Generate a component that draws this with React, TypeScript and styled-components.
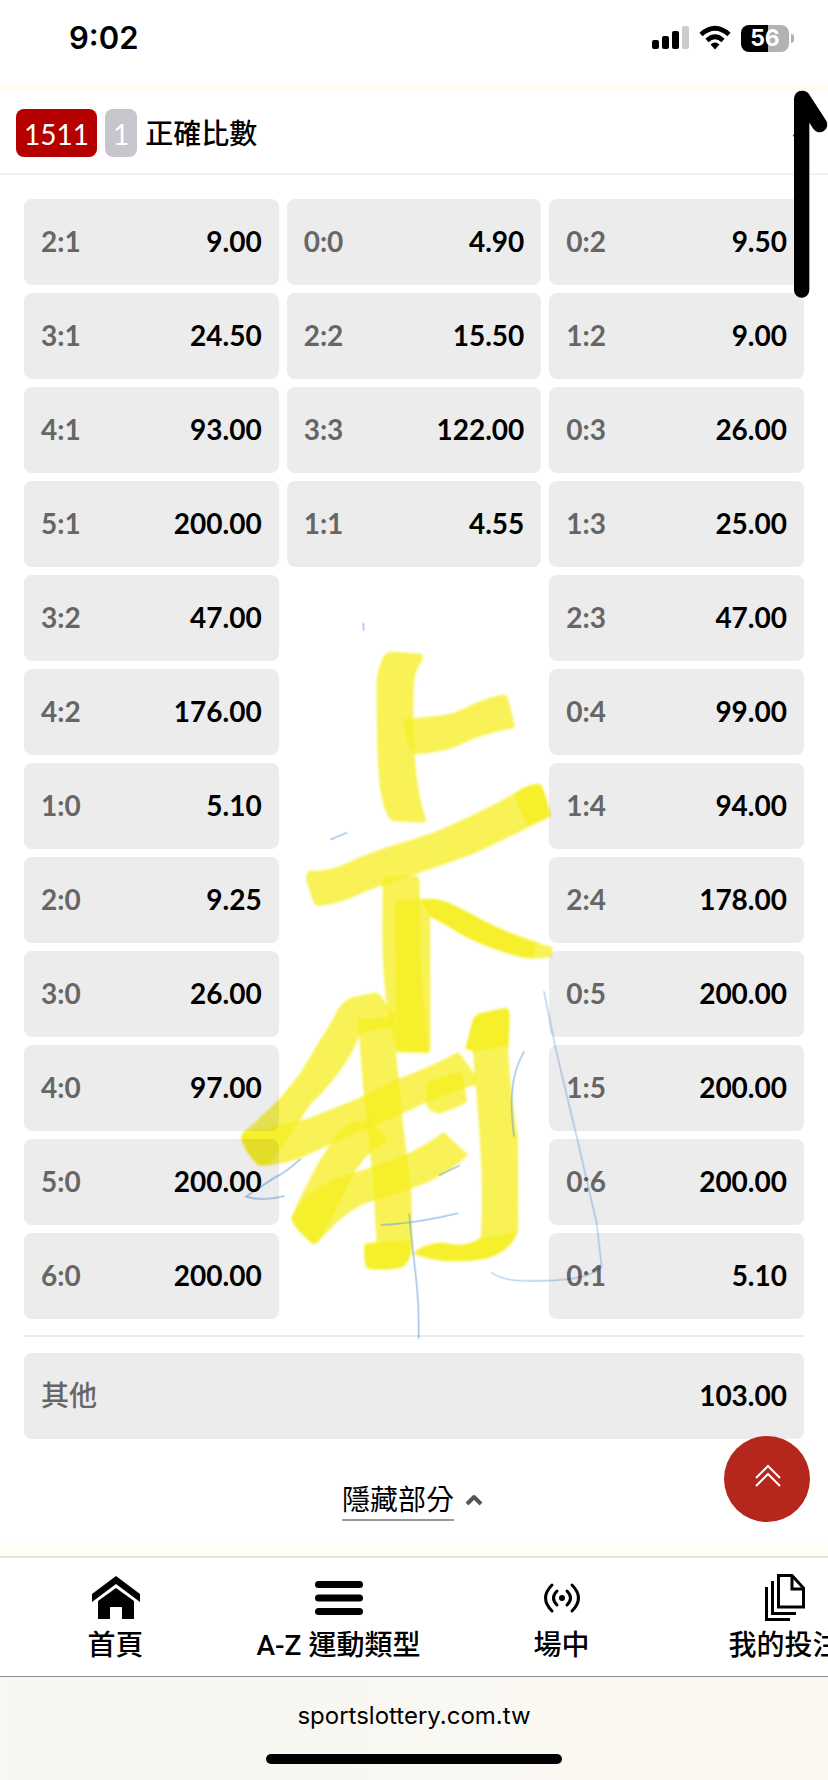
import React from "react";
import styled, { createGlobalStyle } from "styled-components";

const GlobalStyle = createGlobalStyle`
  *, *::before, *::after { box-sizing: border-box; }
  body {
    margin: 0;
    background: #fff;
    color: #000;
    font-family: Lato, "Noto Sans CJK TC", sans-serif;
  }
  button { font: inherit; color: inherit; border: 0; padding: 0; background: none; cursor: pointer; }
  a { color: inherit; text-decoration: none; }
  svg { display: block; overflow: visible; }
`;

const Page = styled.div`
  position: relative;
  display: flex;
  flex-direction: column;
  min-height: 100vh;
  overflow: hidden;
`;

const StatusBar = styled.header`
  display: flex;
  align-items: center;
  justify-content: space-between;
  height: 82px;
  padding: 0 34px 6px 69px;
  font-family: Inter, sans-serif;
`;

const Clock = styled.time`
  font-size: 31px;
  font-weight: 600;
  line-height: 40px;
`;

const StatusIcons = styled.div`
  display: flex;
  align-items: center;
  gap: 10px;
`;

const Battery = styled.div`
  display: flex;
  align-items: center;
  gap: 2px;
`;

const BatteryBody = styled.div`
  width: 48px;
  height: 27px;
  border-radius: 8px;
  background: linear-gradient(90deg, #000 56%, #b2b2b2 56%);
  color: #fff;
  font-size: 23px;
  font-weight: 700;
  line-height: 27px;
  text-align: center;
`;

const BatteryTip = styled.span`
  width: 3px;
  height: 9px;
  border-radius: 0 3px 3px 0;
  background: #b2b2b2;
`;

const CreamBand = styled.div<{ $up?: boolean }>`
  height: ${(p) => (p.$up ? 14 : 12)}px;
  background: ${(p) => (p.$up ? "linear-gradient(#fff, #fffdf4 50%)" : "linear-gradient(#fffefa, #fffcf4 40%, #fffdf6)")};
`;

const MarketHeader = styled.div`
  display: flex;
  align-items: center;
  gap: 8px;
  height: 81px;
  padding: 0 18px 2px 16px;
  border-bottom: 2px solid #f0f0f1;
`;

const Tag = styled.span<{ $tone: "red" | "grey" }>`
  height: 48px;
  padding: 0 8px;
  border-radius: 8px;
  background: ${(p) => (p.$tone === "red" ? "#b50000" : "#c7c6cc")};
  color: #fff;
  font-size: 28px;
  line-height: 50px;
`;

const MarketTitle = styled.h1`
  flex: 1;
  margin: 0;
  font-size: 28px;
  font-weight: 500;
  line-height: 48px;
`;

const Board = styled.main`
  flex: 1;
  padding: 24px 24px 0;
`;

const Columns = styled.div`
  display: grid;
  grid-template-columns: repeat(3, 1fr);
  gap: 8px;
`;

const Column = styled.div`
  display: flex;
  flex-direction: column;
  gap: 8px;
`;

const OddsButton = styled.button`
  display: flex;
  align-items: center;
  justify-content: space-between;
  width: 100%;
  height: 86px;
  padding: 0 17px 2px;
  border-radius: 8px;
  background: #ececec;
  font-size: 28px;
  line-height: 36px;
`;

const Outcome = styled.span<{ $named: boolean }>`
  color: #666;
  font-weight: ${(p) => (p.$named ? 500 : 700)};
`;

const Price = styled.span`
  font-weight: 700;
`;

const Rule = styled.hr`
  height: 2px;
  margin: 16px 0;
  border: 0;
  background: #ebebeb;
`;

const ToggleRow = styled.div`
  display: flex;
  justify-content: center;
  padding: 40px 3px 21px 0;
`;

const ToggleButton = styled.button`
  display: flex;
  align-items: center;
  gap: 11px;
`;

const ToggleLabel = styled.span`
  border-bottom: 2px solid #999;
  font-size: 28px;
  line-height: 40px;
`;

const TopButton = styled.button`
  position: absolute;
  right: 18px;
  bottom: 258px;
  display: flex;
  align-items: center;
  justify-content: center;
  width: 86px;
  height: 86px;
  padding: 0 0 6px 2px;
  border-radius: 50%;
  background: #b5261c;
`;

const Nav = styled.nav`
  display: flex;
  height: 121px;
  padding: 18px 0 0 4px;
  border-top: 2px solid #e4e4e4;
  border-bottom: 1px solid #8f8e8b;
  overflow: hidden;
`;

const NavItem = styled.a`
  flex: 0 0 223px;
  display: flex;
  flex-direction: column;
  align-items: center;
  gap: 6px;
  font-family: Roboto, "Noto Sans CJK TC", sans-serif;
  font-size: 28px;
  font-weight: 500;
  line-height: 40px;
  white-space: nowrap;
`;

const BrowserBar = styled.footer`
  display: flex;
  flex-direction: column;
  align-items: center;
  justify-content: space-between;
  height: 103px;
  padding: 23px 0 16px;
  background: linear-gradient(90deg, #f9f7f2, #f8f6f0 30%, #faf8f2 60%, #fbf8f1);
`;

const Address = styled.a`
  font-family: Inter, sans-serif;
  font-size: 24px;
  line-height: 32px;
`;

const HomeIndicator = styled.span`
  width: 296px;
  height: 10px;
  border-radius: 5px;
  background: #000;
`;

const Doodle = styled.svg`
  position: absolute;
  top: 0;
  left: 0;
  width: 100%;
  height: auto;
  mix-blend-mode: multiply;
  pointer-events: none;
`;

const Marker = styled.g`
  fill: #f6ee1c;
  fill-opacity: 0.74;
  stroke: none;
  filter: blur(3px);
`;

const Pencil = styled.g`
  fill: none;
  stroke: #5c9ae6;
  stroke-width: 4px;
  stroke-linecap: round;
  stroke-opacity: 0.7;
`;

const Pen = styled.path`
  fill: none;
  stroke: #000;
  stroke-width: 46px;
  stroke-linecap: round;
  stroke-linejoin: round;
`;

type Odds = [string, string];

const columns: Odds[][] = [
  [
    ["2:1", "9.00"], ["3:1", "24.50"], ["4:1", "93.00"], ["5:1", "200.00"],
    ["3:2", "47.00"], ["4:2", "176.00"], ["1:0", "5.10"], ["2:0", "9.25"],
    ["3:0", "26.00"], ["4:0", "97.00"], ["5:0", "200.00"], ["6:0", "200.00"],
  ],
  [["0:0", "4.90"], ["2:2", "15.50"], ["3:3", "122.00"], ["1:1", "4.55"]],
  [
    ["0:2", "9.50"], ["1:2", "9.00"], ["0:3", "26.00"], ["1:3", "25.00"],
    ["2:3", "47.00"], ["0:4", "99.00"], ["1:4", "94.00"], ["2:4", "178.00"],
    ["0:5", "200.00"], ["1:5", "200.00"], ["0:6", "200.00"], ["0:1", "5.10"],
  ],
];

const OddsCell = ({ odds: [label, price] }: { odds: Odds }) => (
  <OddsButton type="button">
    <Outcome $named={!label.includes(":")}>{label}</Outcome>
    <Price>{price}</Price>
  </OddsButton>
);

const Chevron = () => (
  <svg width="18" height="12" viewBox="0 0 18 12" fill="none" stroke="#555" strokeWidth="4" aria-hidden="true">
    <path d="M2 10L9 3L16 10" strokeLinejoin="round" />
  </svg>
);

const SignalIcon = () => (
  <svg width="37" height="24" viewBox="0 0 37 24" aria-hidden="true">
    <rect x="0" y="14" width="7" height="9" rx="2" />
    <rect x="10" y="10" width="7" height="13" rx="2" />
    <rect x="20" y="5" width="7" height="18" rx="2" />
    <rect x="30" y="0" width="7" height="23" rx="2" fill="#ccc" />
  </svg>
);

const WifiIcon = () => (
  <svg width="32" height="24" viewBox="0 0 32 24" aria-hidden="true">
    <path d="M2 8.500Q16 -4 30 8.500" fill="none" stroke="#000" strokeWidth="4.800" />
    <path d="M8 14.500Q16 7 24 14.500" fill="none" stroke="#000" strokeWidth="4.600" />
    <path d="M11.500 18.500Q16 14.500 20.500 18.500L16 23.500Z" />
  </svg>
);

const HomeIcon = () => (
  <svg width="48" height="44" viewBox="0 0 48 44" aria-hidden="true">
    <path d="M24 0L48 18V26L24 8L0 26V18Z" />
    <path d="M24 12L42 25V43H30V31H18V43H6V25Z" />
  </svg>
);

const MenuIcon = () => (
  <svg width="48" height="44" viewBox="0 0 48 44" aria-hidden="true">
    <rect y="5" width="48" height="7" rx="3.500" />
    <rect y="18.500" width="48" height="7" rx="3.500" />
    <rect y="32" width="48" height="7" rx="3.500" />
  </svg>
);

const LiveIcon = () => (
  <svg width="36" height="44" viewBox="0 0 36 44" fill="none" stroke="#000" strokeWidth="3" strokeLinecap="round" aria-hidden="true">
    <circle cx="18" cy="22" r="3" fill="#000" stroke="none" />
    <path d="M13 15Q6 22 13 29M23 15Q30 22 23 29" />
    <path d="M8 9Q-5 22 8 35M28 9Q41 22 28 35" />
  </svg>
);

const SlipsIcon = () => (
  <svg width="42" height="44" viewBox="0 0 42 44" fill="none" stroke="#000" strokeWidth="3" aria-hidden="true">
    <path d="M14.500 -0.500H28L39.500 12V31H14.500Z" />
    <path d="M28 0V13H40" />
    <path d="M8.500 5V37.500H32M2.500 11V43.500H26" />
  </svg>
);

export default function App() {
  return (
    <>
      <GlobalStyle />
      <Page>
        <StatusBar>
          <Clock>9:02</Clock>
          <StatusIcons>
            <SignalIcon />
            <WifiIcon />
            <Battery>
              <BatteryBody>56</BatteryBody>
              <BatteryTip />
            </Battery>
          </StatusIcons>
        </StatusBar>
        <CreamBand />
        <MarketHeader>
          <Tag $tone="red">1511</Tag>
          <Tag $tone="grey">1</Tag>
          <MarketTitle>正確比數</MarketTitle>
          <button type="button" aria-label="收合">
            <Chevron />
          </button>
        </MarketHeader>
        <Board>
          <Columns>
            {columns.map((column, i) => (
              <Column key={i}>
                {column.map((odds) => (
                  <OddsCell key={odds[0]} odds={odds} />
                ))}
              </Column>
            ))}
          </Columns>
          <Rule />
          <OddsCell odds={["其他", "103.00"]} />
          <ToggleRow>
            <ToggleButton type="button">
              <ToggleLabel>隱藏部分</ToggleLabel>
              <Chevron />
            </ToggleButton>
          </ToggleRow>
        </Board>
        <CreamBand $up />
        <Nav>
          <NavItem href="#home"><HomeIcon />首頁</NavItem>
          <NavItem href="#sports"><MenuIcon />A-Z 運動類型</NavItem>
          <NavItem href="#live"><LiveIcon />場中</NavItem>
          <NavItem href="#bets"><SlipsIcon />我的投注</NavItem>
        </Nav>
        <BrowserBar>
          <Address href="#site">sportslottery.com.tw</Address>
          <HomeIndicator />
        </BrowserBar>
        <TopButton type="button" aria-label="回到頂端">
          <svg width="26" height="22" viewBox="0 0 26 22" fill="none" stroke="#fff" strokeWidth="2" aria-hidden="true">
            <path d="M1 13L13 1L25 13M1 21L13 9L25 21" />
          </svg>
        </TopButton>
        <Doodle viewBox="0 0 2484 4200" aria-hidden="true">
          <Marker>
            <g transform="translate(690 1800)">
              <path d="M480 155L570 160Q582 164 578 180Q552 215 551 260C548 400 552 560 588 655Q586 668 575 668L492 664Q478 660 470 640C445 580 440 500 440 240Q446 190 466 162Z" />
              <path d="M520 355L550 355C600 348 640 350 680 335C730 312 770 292 818 284Q830 283 834 295L856 382C800 395 750 405 700 430C650 455 600 458 553 464C530 430 525 390 520 355Z" />
              <path d="M240 812Q300 815 360 785C450 740 560 720 640 685C720 650 800 612 860 575Q900 552 930 552Q940 560 962 650C860 700 780 740 720 765C600 810 500 840 420 870C360 895 320 915 265 918Q255 918 250 905L228 840Q228 816 240 812Z" />
              <path d="M855 580Q890 552 930 552Q942 560 962 645Q920 668 892 675Q862 620 855 580Z" />
            </g>
            <g transform="translate(690 2580)">
              <path d="M458 52L555 46Q570 48 569 70L571 280Q580 450 598 575L500 575Q455 420 457 200Z" />
              <path d="M495 120L600 170L602 555Q602 578 590 579L498 577Z" />
              <path d="M495 120L610 116C650 120 680 140 730 165C800 205 880 235 968 262L965 290Q920 300 870 292C790 270 720 240 680 215C640 190 610 175 600 170Z" />
              <path d="M572 120L610 118C650 122 680 140 730 165C800 205 860 228 920 246L910 290Q880 292 860 285C790 268 720 240 680 215C640 190 610 175 600 170Z" />
            </g>
            <g transform="translate(690 3150)">
              <path d="M365 -158L430 -171Q445 -174 452 -163L490 -108L492 -68Q430 -65 390 -50L370 0Q320 90 240 165L120 345L85 347Q40 300 33 262Q36 248 70 222L150 145L210 70L310 -95Q330 -145 365 -158Z" />
              <path d="M383 -98Q440 -85 495 -106L497 0L517 200L545 440L546 595Q540 640 515 652Q450 665 412 655Q400 640 404 582L439 576L430 400L400 120Z" />
              <path d="M404 582L545 570L546 600Q536 640 515 652Q450 665 412 655Q402 640 404 582Z" />
              <path d="M40 245Q150 230 240 203L385 145L500 88Q600 52 680 8Q692 8 700 25L740 80L738 105Q640 130 520 190L340 265L210 325Q140 348 85 347Q40 300 33 262Z" />
              <path d="M592 95L695 64L712 155Q680 175 625 192Q590 180 588 160Z" />
              <path d="M330 240Q365 210 420 212L475 270Q410 305 375 365L290 530Q268 585 250 583Q190 535 183 505Q215 430 270 330Z" />
              <path d="M185 500Q230 420 320 385L430 350Q560 310 640 246L715 315Q640 385 545 415L400 462Q330 500 300 540L250 583Q195 535 185 500Z" />
              <path d="M745 -109L825 -126Q839 -126 839 -105L835 5Q840 120 864 260L865 540Q850 600 770 625Q640 650 545 610Q590 575 640 578Q710 595 752 562C765 400 745 200 728 2L706 -5L730 -95Z" />
              <path d="M745 -109L825 -126Q839 -126 839 -105L836 -15Q780 -2 730 5L706 -5L730 -95Z" />
              <path d="M555 610Q600 578 640 579Q710 595 752 565L860 545Q840 605 770 625Q650 645 555 610Z" />
            </g>
          </Marker>
          <Pencil transform="translate(690 3150)">
            <path d="M882 5C850 60 835 130 852 258" />
            <path d="M942 -175L978 0L1040 260L1100 520L1115 650Q1080 690 940 692C860 695 815 690 785 668" strokeOpacity="0.5" />
            <path d="M210 328Q170 365 130 385L48 440Q100 455 162 438" />
            <path d="M453 525Q560 520 683 490" />
            <path d="M538 492C550 650 568 700 566 865" />
            <path d="M628 375L688 347" />
            <path d="M400 -1280L401 -1260M303 -632L350 -652" />
          </Pencil>
          <Pen d="M2405 870V295H2408L2459 374" />
        </Doodle>
      </Page>
    </>
  );
}
